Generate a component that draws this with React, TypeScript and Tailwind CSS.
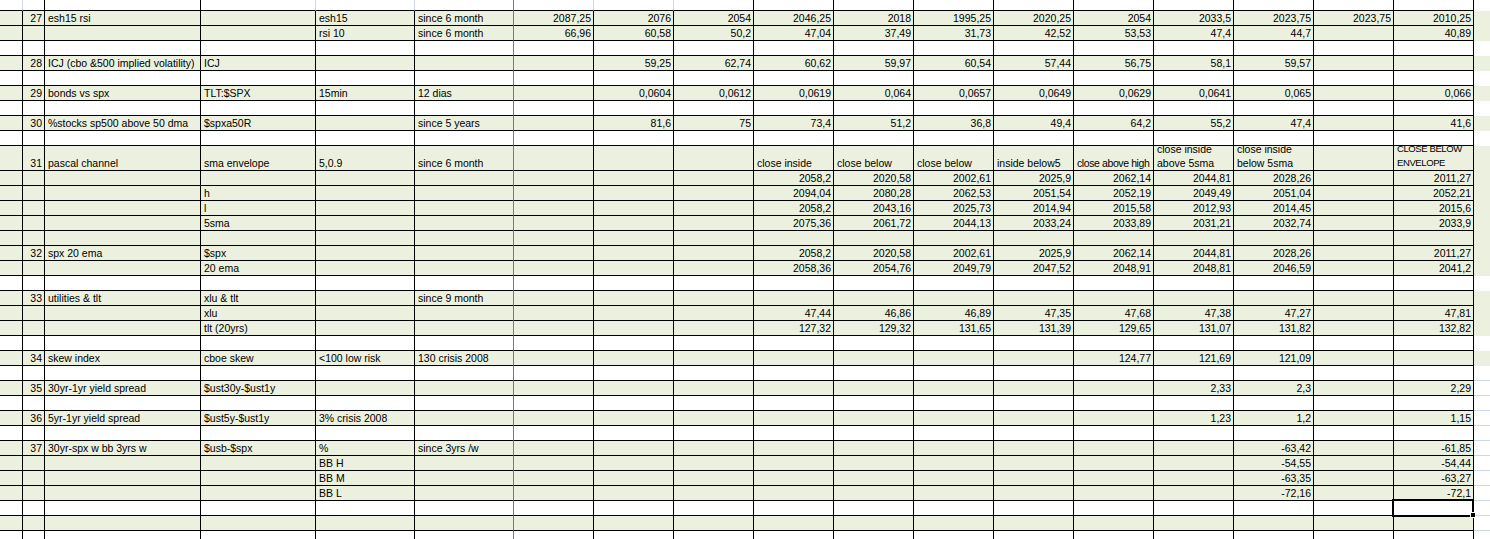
import React from 'react';

type Strip = 'g' | 'w' | 'l';
type Row = { meta: string[]; data: string[]; g?: boolean; h?: number; strip: Strip; sel?: boolean };

const E5 = ['', '', '', '', ''];
const E12 = ['', '', '', '', '', '', '', '', '', '', '', ''];

const blank = (g: boolean, strip: Strip): Row => ({ meta: E5, data: E12, g, strip });

const rows: Row[] = [
  {
    meta: ['27', 'esh15 rsi', '', 'esh15', 'since 6 month'],
    data: ['2087,25', '2076', '2054', '2046,25', '2018', '1995,25', '2020,25', '2054', '2033,5', '2023,75', '2023,75', '2010,25'],
    g: true,
    strip: 'g',
  },
  {
    meta: ['', '', '', 'rsi 10', 'since 6 month'],
    data: ['66,96', '60,58', '50,2', '47,04', '37,49', '31,73', '42,52', '53,53', '47,4', '44,7', '', '40,89'],
    g: true,
    strip: 'g',
  },
  blank(false, 'w'),
  {
    meta: ['28', 'ICJ (cbo &500 implied volatility)', 'ICJ', '', ''],
    data: ['', '59,25', '62,74', '60,62', '59,97', '60,54', '57,44', '56,75', '58,1', '59,57', '', ''],
    g: true,
    strip: 'g',
  },
  blank(false, 'w'),
  {
    meta: ['29', 'bonds vs spx', 'TLT:$SPX', '15min', '12 dias'],
    data: ['', '0,0604', '0,0612', '0,0619', '0,064', '0,0657', '0,0649', '0,0629', '0,0641', '0,065', '', '0,066'],
    g: true,
    strip: 'g',
  },
  blank(false, 'w'),
  {
    meta: ['30', '%stocks sp500 above 50 dma', '$spxa50R', '', 'since 5 years'],
    data: ['', '81,6', '75', '73,4', '51,2', '36,8', '49,4', '64,2', '55,2', '47,4', '', '41,6'],
    g: true,
    strip: 'g',
  },
  blank(false, 'w'),
  {
    meta: ['31', 'pascal channel', 'sma envelope', '5,0.9', 'since 6 month'],
    data: ['', '', '', 'close inside', 'close below', 'close below', 'inside below5', 'close above high', 'close inside|above 5sma', 'close inside|below 5sma', '', 'CLOSE BELOW|ENVELOPE'],
    g: true,
    h: 25,
    strip: 'g',
  },
  {
    meta: E5,
    data: ['', '', '', '2058,2', '2020,58', '2002,61', '2025,9', '2062,14', '2044,81', '2028,26', '', '2011,27'],
    g: true,
    strip: 'g',
  },
  {
    meta: ['', '', 'h', '', ''],
    data: ['', '', '', '2094,04', '2080,28', '2062,53', '2051,54', '2052,19', '2049,49', '2051,04', '', '2052,21'],
    g: true,
    strip: 'g',
  },
  {
    meta: ['', '', 'l', '', ''],
    data: ['', '', '', '2058,2', '2043,16', '2025,73', '2014,94', '2015,58', '2012,93', '2014,45', '', '2015,6'],
    g: true,
    strip: 'g',
  },
  {
    meta: ['', '', '5sma', '', ''],
    data: ['', '', '', '2075,36', '2061,72', '2044,13', '2033,24', '2033,89', '2031,21', '2032,74', '', '2033,9'],
    g: true,
    strip: 'g',
  },
  blank(true, 'g'),
  {
    meta: ['32', 'spx 20 ema', '$spx', '', ''],
    data: ['', '', '', '2058,2', '2020,58', '2002,61', '2025,9', '2062,14', '2044,81', '2028,26', '', '2011,27'],
    g: true,
    strip: 'g',
  },
  {
    meta: ['', '', '20 ema', '', ''],
    data: ['', '', '', '2058,36', '2054,76', '2049,79', '2047,52', '2048,91', '2048,81', '2046,59', '', '2041,2'],
    g: true,
    strip: 'g',
  },
  blank(false, 'w'),
  { meta: ['33', 'utilities & tlt', 'xlu & tlt', '', 'since 9 month'], data: E12, g: true, strip: 'g' },
  {
    meta: ['', '', 'xlu', '', ''],
    data: ['', '', '', '47,44', '46,86', '46,89', '47,35', '47,68', '47,38', '47,27', '', '47,81'],
    g: true,
    strip: 'g',
  },
  {
    meta: ['', '', 'tlt (20yrs)', '', ''],
    data: ['', '', '', '127,32', '129,32', '131,65', '131,39', '129,65', '131,07', '131,82', '', '132,82'],
    g: true,
    strip: 'g',
  },
  blank(false, 'w'),
  {
    meta: ['34', 'skew index', 'cboe skew', '<100 low risk', '130 crisis 2008'],
    data: ['', '', '', '', '', '', '', '124,77', '121,69', '121,09', '', ''],
    g: true,
    strip: 'g',
  },
  blank(false, 'l'),
  {
    meta: ['35', '30yr-1yr yield spread', '$ust30y-$ust1y', '', ''],
    data: ['', '', '', '', '', '', '', '', '2,33', '2,3', '', '2,29'],
    g: true,
    strip: 'l',
  },
  blank(false, 'l'),
  {
    meta: ['36', '5yr-1yr yield spread', '$ust5y-$ust1y', '3% crisis 2008', ''],
    data: ['', '', '', '', '', '', '', '', '1,23', '1,2', '', '1,15'],
    g: true,
    strip: 'l',
  },
  blank(false, 'l'),
  {
    meta: ['37', '30yr-spx w bb 3yrs w', '$usb-$spx', '%', 'since 3yrs /w'],
    data: ['', '', '', '', '', '', '', '', '', '-63,42', '', '-61,85'],
    g: true,
    strip: 'l',
  },
  {
    meta: ['', '', '', 'BB H', ''],
    data: ['', '', '', '', '', '', '', '', '', '-54,55', '', '-54,44'],
    g: true,
    strip: 'l',
  },
  {
    meta: ['', '', '', 'BB M', ''],
    data: ['', '', '', '', '', '', '', '', '', '-63,35', '', '-63,27'],
    g: true,
    strip: 'l',
  },
  {
    meta: ['', '', '', 'BB L', ''],
    data: ['', '', '', '', '', '', '', '', '', '-72,16', '', '-72,1'],
    g: true,
    strip: 'l',
  },
  { ...blank(false, 'l'), sel: true },
  blank(true, 'l'),
  blank(false, 'l'),
];

const COLS = 'grid grid-cols-[23px_22px_156px_115px_99px_99px_repeat(12,80px)_16px]';
const isNum = (s: string) => /^-?[\d.,]+$/.test(s);

function Cell({ text, g, right, gray, sel }: { text: string; g?: boolean; right?: boolean; gray?: boolean; sel?: boolean }) {
  const lines = text ? text.split('|') : [];
  // calibri is narrower than what we have; squeeze the long header labels a bit
  const tight = text === 'close above high' || text.startsWith('CLOSE');
  return (
    <div
      className={`relative flex min-w-0 flex-col justify-end border-b border-r border-black ${gray ? 'border-r-[#7a7a7a]' : ''} ${
        g ? 'bg-[#ebf1de]' : 'bg-white'
      } ${right ? 'items-end pr-[2px]' : 'items-start pl-[3px]'} ${sel ? 'overflow-visible' : 'overflow-hidden'}`}
    >
      {lines.map((l, i) => (
        <span
          key={i}
          className={`whitespace-nowrap ${lines.length > 1 ? 'leading-[14px]' : 'leading-[13px]'} ${
            tight ? 'tracking-[-0.4px]' : ''
          } ${text.startsWith('CLOSE') ? 'text-[9.5px]' : ''}`}
        >
          {l}
        </span>
      ))}
      {sel && (
        <>
          <div className="absolute -left-[2px] -top-[2px] z-10 h-[18px] w-[82px] border-2 border-black">
            <div className="h-full w-full border border-white" />
          </div>
          <div className="absolute -bottom-[3px] -right-[3px] z-20 h-[6px] w-[6px] border border-white bg-black" />
        </>
      )}
    </div>
  );
}

function SheetRow({ row }: { row: Row }) {
  const { meta, data, g, h = 15, strip, sel } = row;
  return (
    <div className={`${COLS} ${h === 25 ? 'h-[25px]' : 'h-[15px]'}`}>
      <div className={`border-b border-r border-black ${g ? 'bg-[#ebf1de]' : 'bg-white'}`} />
      <Cell text={meta[0]} g={g} right />
      <Cell text={meta[1]} g={g} />
      <Cell text={meta[2]} g={g} />
      <Cell text={meta[3]} g={g} />
      <Cell text={meta[4]} g={g} gray />
      {data.map((d, i) => (
        <Cell key={i} text={d} g={g} right={isNum(d)} sel={sel && i === 11} />
      ))}
      <div
        className={
          strip === 'g' ? 'bg-[#ebf1de]' : strip === 'l' ? 'border-b border-[#d0d7e5] bg-white' : 'bg-white'
        }
      />
    </div>
  );
}

// top partially visible row: mix of plain gridlines and black borders
const topLines = [
  'border-r-[#d0d7e5]',
  'border-r-black',
  'border-r-black',
  'border-r-[#d0d7e5]',
  'border-r-[#d0d7e5]',
  'border-r-[#7a7a7a]',
  'border-r-[#d0d7e5]',
  'border-r-[#d0d7e5]',
  'border-r-black',
  'border-r-black',
  'border-r-black',
  'border-r-black',
  'border-r-black',
  'border-r-black',
  'border-r-black',
  'border-r-black',
  'border-r-black',
  'border-r-black',
];

export default function App() {
  return (
    <div className="h-[539px] w-[1490px] overflow-hidden bg-white font-['Liberation_Sans',Arial,sans-serif] text-[10.5px] text-black">
      <div className={`${COLS} h-[11px]`}>
        {topLines.map((c, i) => (
          <div key={i} className={`border-b border-r border-b-black ${c}`} />
        ))}
        <div />
      </div>
      {rows.map((r, i) => (
        <SheetRow key={i} row={r} />
      ))}
    </div>
  );
}
